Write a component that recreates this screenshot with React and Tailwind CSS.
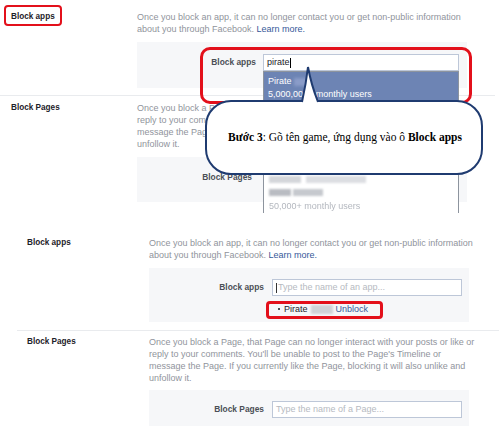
import React from 'react';

const desc = 'text-[9px] leading-[12px] text-[#90949c] whitespace-nowrap';
const leftLabel = 'block text-[8.2px] leading-[12px] font-bold text-[#1d2129] whitespace-nowrap';
const panelLabel = 'text-[8.4px] leading-[17px] font-bold text-[#4b4f56] text-right whitespace-nowrap';
const inputBox = 'relative h-[17px] border border-[#bdc7d8] bg-white text-[9px] leading-[15px] pl-[3px] whitespace-nowrap';

function PagesText() {
  return (
    <p className={desc}>
      Once you block a Page, that Page can no longer interact with your posts or like or
      <br />
      reply to your comments. You'll be unable to post to the Page's Timeline or
      <br />
      message the Page. If you currently like the Page, blocking it will also unlike and
      <br />
      unfollow it.
    </p>
  );
}

function AppsText() {
  return (
    <p className={desc}>
      Once you block an app, it can no longer contact you or get non-public information
      <br />
      about you through Facebook. <span className="text-[#365899]">Learn more.</span>
    </p>
  );
}

function Dropdown() {
  return (
    <div className="absolute left-[-1px] top-[16px] w-[196px] h-[150px] border border-[#8d949e] bg-white text-[9px] leading-[13px] z-10">
      <div className="bg-[#6d84b4] text-white pl-[4px] pt-[3px] h-[30px]">
        <div className="flex items-center gap-[2px]">
          Pirate <span className="w-[14px] h-[8px] bg-[#8a9cc8] blur-[1.5px]" />
        </div>
        <div>5,000,000+ monthly users</div>
      </div>
      <div className="h-[74px]" />
      <div className="pl-[5px] flex flex-col gap-[6px]">
        <div className="flex gap-[5px]">
          <span className="w-[32px] h-[7px] bg-[#d4d6da] blur-[1px]" />
          <span className="w-[60px] h-[7px] bg-[#dcdee2] blur-[1px]" />
        </div>
        <div className="flex gap-[2px]">
          <span className="w-[22px] h-[7px] bg-[#b9bcc2] blur-[1px]" />
          <span className="w-[30px] h-[7px] bg-[#c6c9ce] blur-[1px]" />
        </div>
        <div className="text-[#b4b8bf] blur-[0.7px] leading-[9px]">50,000+ monthly users</div>
      </div>
    </div>
  );
}

function TopShot() {
  return (
    <section className="h-[213px] overflow-hidden">
      <div className="w-[495px] flex pt-[11px] pb-[7px] border-b border-[#e9ebee]">
        <div className="w-[137px] pl-[11px]">
          <span className={leftLabel}>Block apps</span>
        </div>
        <div className="w-[330px]">
          <AppsText />
          <div className="mt-[7px] h-[46px] bg-[#f6f7f9] pt-[12px] flex">
            <div className={`w-[126px] pr-[7px] ${panelLabel}`}>Block apps</div>
            <div className={`w-[196px] text-[#1d2129] ${inputBox}`}>
              pirate<span className="inline-block w-px h-[10px] bg-black align-middle" />
              <Dropdown />
            </div>
          </div>
        </div>
      </div>
      <div className="flex pt-[6px]">
        <div className="w-[137px] pl-[11px]">
          <span className={leftLabel}>Block Pages</span>
        </div>
        <div className="w-[330px]">
          <PagesText />
          <div className="mt-[7px] h-[45px] bg-[#f6f7f9] pt-[12px] flex">
            <div className={`w-[126px] pr-[11px] ${panelLabel}`}>Block Pages</div>
          </div>
        </div>
      </div>
    </section>
  );
}

function BottomShot() {
  return (
    <section className="h-[213px] pl-[17px]">
      <div className="flex pt-[24px] pb-[8px] border-b border-[#e9ebee]">
        <div className="w-[132px] pl-[10px]">
          <span className={leftLabel}>Block apps</span>
        </div>
        <div className="w-[320px]">
          <AppsText />
          <div className="mt-[7px] h-[54px] bg-[#f6f7f9] pt-[11px] flex">
            <div className={`w-[123px] pr-[8px] ${panelLabel}`}>Block apps</div>
            <div className="w-[190px]">
              <div className={`text-[#b6bac1] ${inputBox}`}>
                <span className="inline-block w-px h-[10px] bg-[#333] align-middle mr-px" />
                Type the name of an app...
              </div>
              <div className="mt-[7px] pl-[6px] flex items-center text-[9px] leading-[12px] whitespace-nowrap">
                <span className="w-[2px] h-[2px] bg-[#4b4f56] mr-[4px]" />
                <span className="text-[#1d2129]">Pirate</span>
                <span className="w-[22px] h-[9px] mx-[3px] bg-[#cfd2d7] blur-[1px]" />
                <span className="text-[#365899]">Unblock</span>
              </div>
            </div>
          </div>
        </div>
      </div>
      <div className="flex pt-[5px]">
        <div className="w-[132px] pl-[10px]">
          <span className={leftLabel}>Block Pages</span>
        </div>
        <div className="w-[320px]">
          <PagesText />
          <div className="mt-[6px] h-[40px] bg-[#f6f7f9] pt-[11px] flex">
            <div className={`w-[123px] pr-[8px] ${panelLabel}`}>Block Pages</div>
            <div className={`w-[190px] text-[#b6bac1] ${inputBox}`}>Type the name of a Page...</div>
          </div>
        </div>
      </div>
    </section>
  );
}

export default function App() {
  return (
    <div className="relative w-[499px] h-[426px] overflow-hidden bg-white font-['Liberation_Sans',Arial,sans-serif]">
      <TopShot />
      <BottomShot />

      {/* red highlight boxes */}
      <div className="absolute left-[4px] top-[5px] w-[58px] h-[21px] border-[2.5px] border-[#e3101b] rounded-[4px]" />
      <div className="absolute left-[200px] top-[47px] w-[272px] h-[57px] border-[3px] border-[#e3101b] rounded-[10px] z-20" />
      <div className="absolute left-[266px] top-[301px] w-[117px] h-[18px] border-[3px] border-[#e3101b] rounded-[4px]" />

      {/* callout */}
      <div className="absolute left-[205px] top-[100px] w-[278px] h-[75px] border-2 border-[#1f3b70] rounded-[26px] bg-white z-30 flex items-center justify-center">
        <p className="text-[11.5px] text-black whitespace-nowrap font-['Liberation_Serif','Times_New_Roman',serif] pl-[2px]">
          <b>Bước 3</b>: Gõ tên game, ứng dụng vào ô <b>Block apps</b>
        </p>
      </div>
      <svg className="absolute left-[298px] top-[64px] z-40" width="24" height="42" viewBox="0 0 24 42">
        <path d="M4 39 Q8 20 10 3 Q13 20 20 39 Z" fill="white" />
        <path d="M4 38 Q8 20 10 3 Q13 20 20 38" fill="none" stroke="#1f3b70" strokeWidth="2" />
      </svg>
    </div>
  );
}
